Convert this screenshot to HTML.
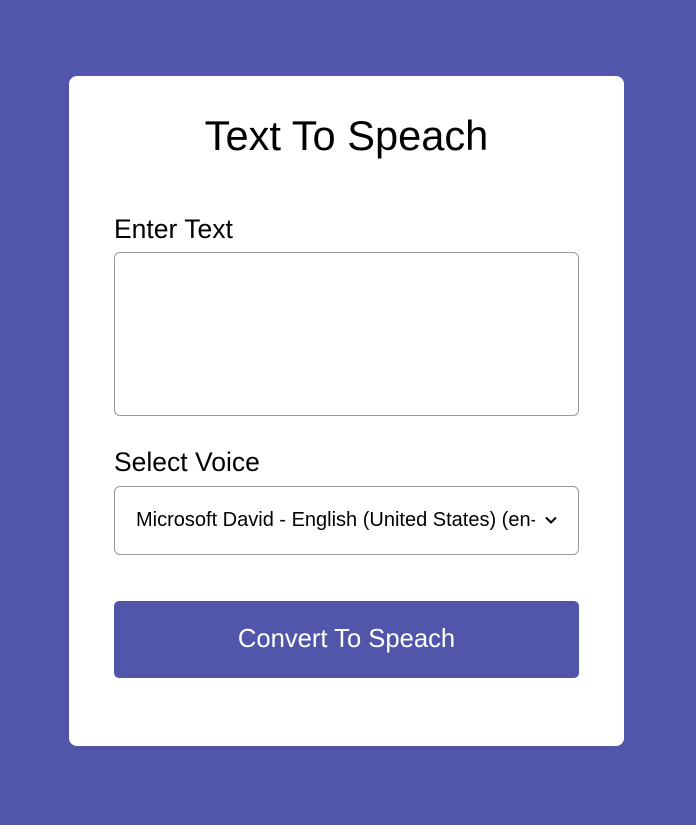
<!DOCTYPE html>
<html><head><style>
*{box-sizing:border-box;margin:0;padding:0}
body{width:696px;height:825px;background:#5156ab;font-family:"Liberation Sans",Arial,sans-serif;position:relative;overflow:hidden}
.card{position:absolute;left:69px;top:76px;width:555px;height:670px;background:#fff;border-radius:8px}
.t{position:absolute;left:0;width:555px;top:37px;text-align:center;font-size:41.6px;color:#000;line-height:46px}
.l{position:absolute;left:45px;font-size:26.5px;color:#000;line-height:30px}
.ta{position:absolute;left:45px;top:176px;width:465px;height:164px;border:1px solid #999;border-radius:6px}
.sel{position:absolute;left:45px;top:410px;width:465px;height:69px;border:1px solid #999;border-radius:6px;font-size:20px;line-height:67px;padding-left:21px;color:#000;white-space:nowrap;overflow:hidden}
.sel svg{position:absolute;right:21px;top:29px}
.sel span{display:inline-block;width:399px;overflow:hidden}
.btn{position:absolute;left:45px;top:525px;width:465px;height:77px;background:#5156ab;border-radius:5px;color:#fff;font-size:25.6px;text-align:center;line-height:77px}
</style></head><body>
<div class="card">
<div class="t">Text To Speach</div>
<div class="l" style="top:138px">Enter Text</div>
<div class="ta"></div>
<div class="l" style="top:371px">Select Voice</div>
<div class="sel"><span>Microsoft David - English (United States) (en-US)</span><svg width="12" height="8" viewBox="0 0 12 8"><path d="M1 1.5 6 6.5 11 1.5" fill="none" stroke="#000" stroke-width="2"/></svg></div>
<div class="btn">Convert To Speach</div>
</div>
</body></html>
